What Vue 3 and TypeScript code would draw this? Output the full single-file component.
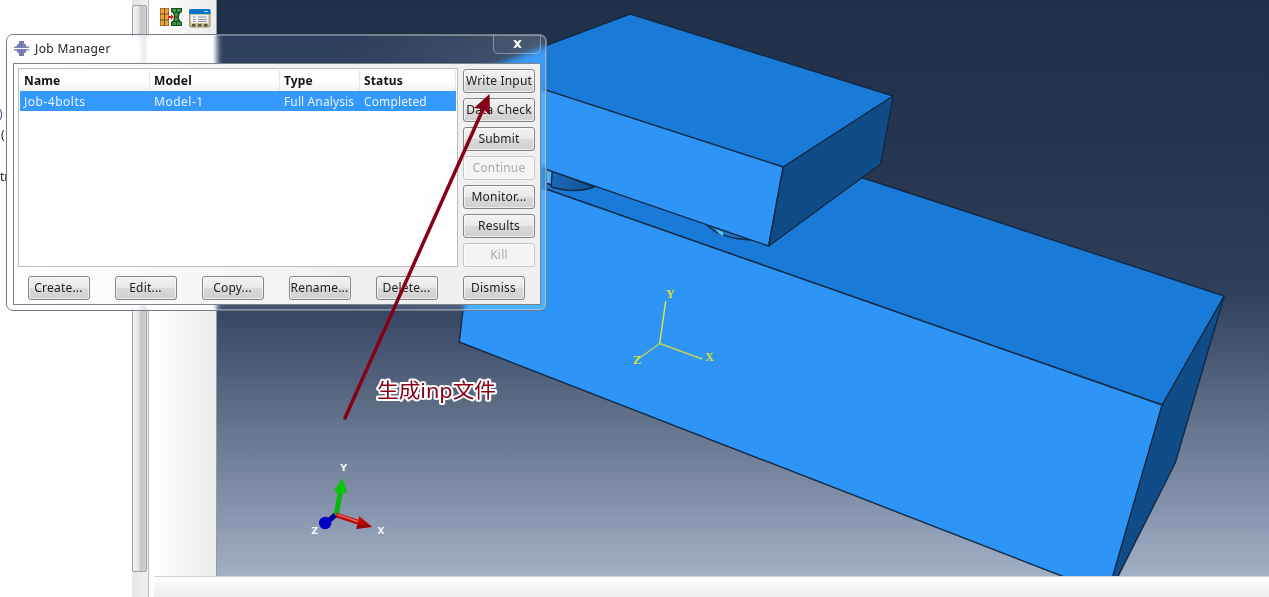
<script setup lang="ts">
interface Action {
  label: string
  disabled?: boolean
}

const sideActions: Action[] = [
  { label: 'Write Input' },
  { label: 'Data Check' },
  { label: 'Submit' },
  { label: 'Continue', disabled: true },
  { label: 'Monitor...' },
  { label: 'Results' },
  { label: 'Kill', disabled: true },
]
const bottomActions: string[] = ['Create...', 'Edit...', 'Copy...', 'Rename...', 'Delete...', 'Dismiss']
const columns: string[] = ['Name', 'Model', 'Type', 'Status']
const job: string[] = ['Job-4bolts', 'Model-1', 'Full Analysis', 'Completed']
</script>

<template>
  <div class="app">
    <aside class="tree">
      <span class="frag frag-blue">)</span>
      <span class="frag frag-paren">(</span>
      <span class="frag frag-tr">tr</span>
    </aside>
    <div class="scroll"><div class="thumb"></div></div>
    <main class="work">
      <div class="upper">
        <div class="tools">
          <svg class="tool" width="24" height="22" viewBox="0 0 24 22">
            <rect x="1" y="2" width="9" height="18" fill="#6b4a20" />
            <path d="M1.500 2.500h3.500v5H1.500zM6 2.500h3.500v5H6zM1.500 8.500h3.500v5H1.500zM6 8.500h3.500v5H6zM1.500 14.500h3.500v5H1.500zM6 14.500h3.500v5H6z" fill="#efa43b" />
            <path d="M12 2h11v4q-3 1-3 5t3 5v4H12v-4q3-1 3-5t-3-5z" fill="#1b4a26" />
            <path d="M13 3h4v3h-3zM18 3h4v2l-2 1h-2zM16 7h3l-.5 3.500H16zM16 11.500h2.500L19 15h-3zM14 16h3v3h-4zM18 16h2l2 1v2h-4z" fill="#3b9a48" />
            <path d="M9 10h3V8l3 3-3 3v-2H9z" fill="#d92118" />
          </svg>
          <svg class="tool" width="22" height="20" viewBox="0 0 22 20">
            <rect x=".5" y="1.500" width="20.500" height="17.500" rx="1" fill="#c9c19a" stroke="#9a9474" />
            <path d="M0 6V3q0-2 2-2h17.500q2 0 2 2v3z" fill="#0874ca" />
            <rect x="2" y="7" width="17.500" height="8" fill="#eceef2" />
            <path d="M4 9h2.500M4 11.500h2.500M4 13.500h2.500M9 9h8.500M9 11.500h8.500M9 13.500h8.500" stroke="#8f95a0" />
            <path d="M3 16h3.500v2.500H3zM9 16h3.500v2.500H9zM15 16h3.500v2.500H15z" fill="#5e573e" />
            <path d="M15 3.500h4" stroke="#a9d9ff" />
          </svg>
        </div>
        <svg class="scene" width="1052" height="576" viewBox="216.8 0 1052 576">
          <defs>
            <linearGradient id="sky" x1="0" y1="0" x2="0" y2="1">
              <stop offset="0" stop-color="#203049" />
              <stop offset=".25" stop-color="#26354f" />
              <stop offset=".5" stop-color="#2f3f59" />
              <stop offset=".62" stop-color="#495973" />
              <stop offset=".75" stop-color="#67778f" />
              <stop offset=".87" stop-color="#8390aa" />
              <stop offset="1" stop-color="#a2b0c6" />
            </linearGradient>
            <linearGradient id="bolt"><stop offset="0" stop-color="#1868b8" /><stop offset="1" stop-color="#145090" /></linearGradient>
            <linearGradient id="red" x1="0" y1="0" x2="0" y2="1"><stop offset="0" stop-color="#e60c0c" /><stop offset="1" stop-color="#850000" /></linearGradient>
          </defs>
          <rect x="216" width="1054" height="576" fill="url(#sky)" />
          <g stroke="#102a46" stroke-width="1.400" stroke-linejoin="round">
            <path d="M500 60L863 178L1224 296L1162 405L480 166z" fill="#1a7ad8" />
            <path d="M480 166L1162 405L1113 577V596L459 342z" fill="#2e94f5" />
            <path d="M1162 405L1224 296L1175 463L1117 578H1112z" fill="#104d88" />
            <path d="M551 170L594 187Q574 194 551 187z" fill="url(#bolt)" />
            <path d="M546 169l6 2-1 14-5-2z" fill="#46baf5" />
            <path d="M707 225l46 15Q720 239 707 225z" fill="#1b75c7" />
            <path d="M715 229l8 3v4q-5-2-8-7z" fill="#5dc1ec" stroke="none" />
            <path d="M475 72L630 14L893 96L783 167z" fill="#1a7ad8" />
            <path d="M475 67L783 167L768.500 246L475 145z" fill="#2e94f5" />
            <path d="M783 167L893 96L880.500 164L768.500 246z" fill="#104d88" />
          </g>
          <g fill="none" stroke="#b9d557" stroke-width="1.400">
            <path d="M665.500 301L659.500 343.500" stroke="#dced27" />
            <path d="M659.500 343.500L702 359M659.500 343.500L638 359" />
          </g>
          <g class="axis-label">
            <text x="666" y="298">Y</text><text x="705" y="361">X</text><text x="633" y="364">Z</text>
          </g>
          <g>
            <path d="M336 515L340 493" stroke="#08b808" stroke-width="5" />
            <path d="M342 478L347 492Q340 496 334 491z" fill="#08c508" />
            <path d="M336 515L360 523" stroke="#b60d0d" stroke-width="5" />
            <path d="M337 514.500L359 522" stroke="#f45b5b" stroke-width="1.500" />
            <path d="M359 516L372 527L356 529z" fill="url(#red)" />
            <path d="M335 515L327 522" stroke="#000092" stroke-width="5" />
            <circle cx="325" cy="523" r="6.200" fill="#0000c4" />
          </g>
          <g class="triad-label">
            <text x="340" y="471">Y</text><text x="377" y="534">X</text><text x="311" y="534">Z</text>
          </g>
        </svg>
      </div>
      <div class="message"></div>
    </main>

    <section class="dialog">
      <header class="title">
        <svg width="15" height="15" viewBox="0 0 15 15">
          <path d="M5 0h5v2.200q2.500 1 3 4.300H2q.5-3.300 3-4.300zM2 8.500h11q-.5 3.300-3 4.300V15H5v-2.200q-2.500-1-3-4.300z" fill="#7d80b6" />
          <path d="M.5 5v1.500h14V5M.5 10V8.500h14V10" fill="none" stroke="#7d80b6" />
          <path d="M7.500 0v6.500M7.500 8.500V15" stroke="#686ba6" />
          <path d="M1 7.500h13" stroke="#fff" />
        </svg>
        <h1>Job Manager</h1>
        <button class="close"><svg width="9" height="8" viewBox="0 0 9 8"><path d="M0 0h3l1.500 2L6 0h3L6 4l3 4H6L4.500 6 3 8H0l3-4z" fill="#fff" stroke="#3c4a5b" stroke-width=".3" /></svg></button>
      </header>
      <div class="client">
        <div class="top-row">
          <div class="table">
            <div class="row head"><span v-for="c in columns" :key="c">{{ c }}</span></div>
            <div class="row picked"><span v-for="c in job" :key="c">{{ c }}</span></div>
          </div>
          <div class="side">
            <button v-for="a in sideActions" :key="a.label" class="btn" :disabled="a.disabled">{{ a.label }}</button>
          </div>
        </div>
        <div class="bottom"><button v-for="b in bottomActions" :key="b" class="btn">{{ b }}</button></div>
      </div>
    </section>

    <svg class="note" width="1269" height="597" viewBox="0 0 1269 597">
      <path d="M345 418L484 107" stroke="#850018" stroke-width="3.500" stroke-linecap="round" />
      <path d="M489.500 94L490 115L483 109L474 108z" fill="#850018" />
      <text x="377" y="398" textLength="119" lengthAdjust="spacingAndGlyphs">生成inp文件</text>
    </svg>
  </div>
</template>

<style>
body { margin: 0; overflow: hidden; }
</style>

<style scoped>
.app { position: relative; display: flex; width: 1269px; height: 597px; overflow: hidden; background: #fefefe; font-family: "Noto Sans", "Open Sans", sans-serif; font-size: 12px; color: #222; }
.tree { position: relative; width: 132px; flex: none; }
.frag { position: absolute; line-height: 16px; }
.frag-blue { left: -1px; top: 106px; color: #63469a; }
.frag-paren { left: 1px; top: 127px; }
.frag-tr { left: 0; top: 169px; }
.scroll { box-sizing: border-box; width: 17px; flex: none; padding-top: 5px; background: linear-gradient(90deg, #e5e5e5, #f1f1f1); border-right: 1px solid #b9b9b9; }
.thumb { box-sizing: border-box; width: 15px; height: 567px; border: 1px solid #a0a0a0; border-radius: 2px; background: linear-gradient(90deg, #f4f4f4, #e2e2e4 45%, #c5c5cb 60%, #d0d0d4); }
.work { flex: 1; display: flex; flex-direction: column; }
.upper { display: flex; height: 576px; }
.tools { box-sizing: border-box; width: 68px; display: flex; align-items: flex-start; gap: 6px; padding: 6px 0 0 10px; border-right: 1px solid #999; background: linear-gradient(90deg, #fff 8%, #ececec); }
.tool { flex: none; }
.tool + .tool { margin-top: 2px; }
.scene { display: block; flex: none; }
.message { height: 20px; margin-left: 5px; border-top: 1px solid #d0d0d0; background: linear-gradient(#fff, #ededed); }
.axis-label { font: bold 12px "Liberation Serif", serif; fill: #dce52c; }
.triad-label { font: bold 9.5px "DejaVu Sans", sans-serif; fill: #f4f6f8; }
.dialog { position: absolute; left: 6px; top: 34px; box-sizing: border-box; width: 541px; height: 277px; padding: 0 5px 6px 6px; border: 1px solid #747d87; border-radius: 7px; box-shadow: inset 0 0 0 1px rgba(255,255,255,.35); background: linear-gradient(90deg, rgba(255,255,255,.03) 60%, rgba(255,255,255,.13)); backdrop-filter: blur(3px) brightness(1.16); }
.title { display: flex; height: 28px; padding-left: 1px; align-items: flex-start; }
.title > svg { margin-top: 6px; }
h1 { margin: 5px 0 0 6px; font-size: 12px; font-weight: 400; line-height: 17px; letter-spacing: .35px; }
.close { margin: 0 0 0 auto; width: 48px; height: 19px; box-sizing: border-box; border: 1px solid rgba(190,205,220,.5); border-top: 0; border-radius: 0 0 5px 5px; background: rgba(255,255,255,.04); display: grid; place-items: center; padding: 0; }
.client { box-sizing: border-box; height: 242px; padding: 4px 5px 0 4px; border: 1px solid #7c858c; background: linear-gradient(90deg, #fff, #f0f0f0 65%); }
.top-row { display: flex; justify-content: space-between; height: 199px; }
.table { box-sizing: border-box; width: 440px; height: 199px; padding: 1px; border: 1px solid #b9bdc2; background: #fefefe; }
.row { display: grid; grid-template-columns: 130px 130px 80px 1fr; align-items: center; height: 20px; }
.row span { padding-left: 4px; white-space: nowrap; }
.head { height: 21px; font-weight: 700; color: #111; background: linear-gradient(#fff 50%, #f2f2f2); }
.head span { border-right: 1px solid #e6e6e6; line-height: 21px; box-sizing: border-box; letter-spacing: .15px; }
.picked { color: #e7f3ff; background: #3399fe; letter-spacing: .12px; }
.picked span:nth-child(-n+2) { letter-spacing: .5px; }
.side { display: flex; flex-direction: column; gap: 5px; width: 72px; padding-top: 1px; box-sizing: border-box; }
.btn { box-sizing: border-box; display: flex; align-items: center; justify-content: center; padding: 0; width: 72px; height: 24px; flex: none; font: inherit; letter-spacing: .2px; line-height: 20px; white-space: nowrap; color: #222; border: 1px solid #858585; border-radius: 3px; box-shadow: inset 0 0 0 1px rgba(255,255,255,.6); background: linear-gradient(#f3f3f3, #e8e8e8 50%, #d9d9d9 52%, #d0d0d0); }
.btn:disabled { color: #a7abb0; border-color: #c4c8cb; background: #f4f4f4; }
.bottom { display: flex; gap: 25px; padding: 9px 0 0 9px; }
.bottom .btn { width: 62px; }
.bottom .btn:first-child { margin-left: .5px; }
.note { position: absolute; left: 0; top: 0; pointer-events: none; }
.note text { font: 20px "Noto Sans", "Noto Sans CJK SC", sans-serif; fill: #850018; stroke: #fff; stroke-width: 4px; stroke-linejoin: round; paint-order: stroke; }
</style>
